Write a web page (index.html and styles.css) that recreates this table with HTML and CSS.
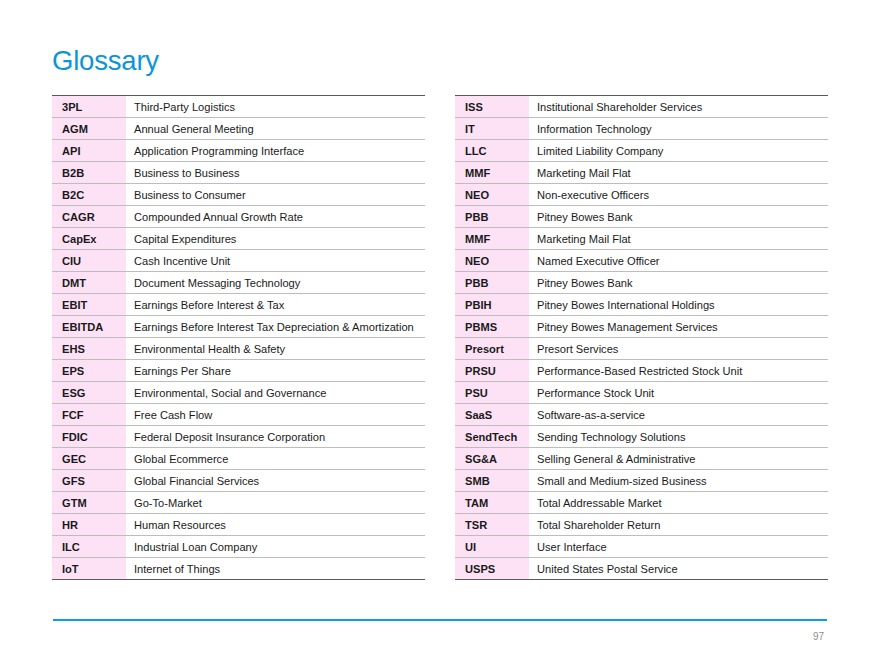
FILE: index.html
```html
<!DOCTYPE html>
<html>
<head>
<meta charset="utf-8">
<link rel="stylesheet" href="styles.css">
</head>
<body>
<div class="page">
  <h1 class="title">Glossary</h1>
  <div class="tables">
    <table class="gloss">
      <tr><td class="term">3PL</td><td class="def">Third-Party Logistics</td></tr>
      <tr><td class="term">AGM</td><td class="def">Annual General Meeting</td></tr>
      <tr><td class="term">API</td><td class="def">Application Programming Interface</td></tr>
      <tr><td class="term">B2B</td><td class="def">Business to Business</td></tr>
      <tr><td class="term">B2C</td><td class="def">Business to Consumer</td></tr>
      <tr><td class="term">CAGR</td><td class="def">Compounded Annual Growth Rate</td></tr>
      <tr><td class="term">CapEx</td><td class="def">Capital Expenditures</td></tr>
      <tr><td class="term">CIU</td><td class="def">Cash Incentive Unit</td></tr>
      <tr><td class="term">DMT</td><td class="def">Document Messaging Technology</td></tr>
      <tr><td class="term">EBIT</td><td class="def">Earnings Before Interest &amp; Tax</td></tr>
      <tr><td class="term">EBITDA</td><td class="def">Earnings Before Interest Tax Depreciation &amp; Amortization</td></tr>
      <tr><td class="term">EHS</td><td class="def">Environmental Health &amp; Safety</td></tr>
      <tr><td class="term">EPS</td><td class="def">Earnings Per Share</td></tr>
      <tr><td class="term">ESG</td><td class="def">Environmental, Social and Governance</td></tr>
      <tr><td class="term">FCF</td><td class="def">Free Cash Flow</td></tr>
      <tr><td class="term">FDIC</td><td class="def">Federal Deposit Insurance Corporation</td></tr>
      <tr><td class="term">GEC</td><td class="def">Global Ecommerce</td></tr>
      <tr><td class="term">GFS</td><td class="def">Global Financial Services</td></tr>
      <tr><td class="term">GTM</td><td class="def">Go-To-Market</td></tr>
      <tr><td class="term">HR</td><td class="def">Human Resources</td></tr>
      <tr><td class="term">ILC</td><td class="def">Industrial Loan Company</td></tr>
      <tr><td class="term">IoT</td><td class="def">Internet of Things</td></tr>
    </table>
    <table class="gloss">
      <tr><td class="term">ISS</td><td class="def">Institutional Shareholder Services</td></tr>
      <tr><td class="term">IT</td><td class="def">Information Technology</td></tr>
      <tr><td class="term">LLC</td><td class="def">Limited Liability Company</td></tr>
      <tr><td class="term">MMF</td><td class="def">Marketing Mail Flat</td></tr>
      <tr><td class="term">NEO</td><td class="def">Non-executive Officers</td></tr>
      <tr><td class="term">PBB</td><td class="def">Pitney Bowes Bank</td></tr>
      <tr><td class="term">MMF</td><td class="def">Marketing Mail Flat</td></tr>
      <tr><td class="term">NEO</td><td class="def">Named Executive Officer</td></tr>
      <tr><td class="term">PBB</td><td class="def">Pitney Bowes Bank</td></tr>
      <tr><td class="term">PBIH</td><td class="def">Pitney Bowes International Holdings</td></tr>
      <tr><td class="term">PBMS</td><td class="def">Pitney Bowes Management Services</td></tr>
      <tr><td class="term">Presort</td><td class="def">Presort Services</td></tr>
      <tr><td class="term">PRSU</td><td class="def">Performance-Based Restricted Stock Unit</td></tr>
      <tr><td class="term">PSU</td><td class="def">Performance Stock Unit</td></tr>
      <tr><td class="term">SaaS</td><td class="def">Software-as-a-service</td></tr>
      <tr><td class="term">SendTech</td><td class="def">Sending Technology Solutions</td></tr>
      <tr><td class="term">SG&amp;A</td><td class="def">Selling General &amp; Administrative</td></tr>
      <tr><td class="term">SMB</td><td class="def">Small and Medium-sized Business</td></tr>
      <tr><td class="term">TAM</td><td class="def">Total Addressable Market</td></tr>
      <tr><td class="term">TSR</td><td class="def">Total Shareholder Return</td></tr>
      <tr><td class="term">UI</td><td class="def">User Interface</td></tr>
      <tr><td class="term">USPS</td><td class="def">United States Postal Service</td></tr>
    </table>
  </div>
  <div class="footer">
    <div class="rule"></div>
    <div class="pagenum">97</div>
  </div>
</div>
</body>
</html>
```

FILE: styles.css
```css
html, body {
  margin: 0;
  padding: 0;
  background: #ffffff;
}

.page {
  width: 880px;
  height: 660px;
  box-sizing: border-box;
  padding: 0 52px 0 52px;
  font-family: "Liberation Sans", Arial, sans-serif;
  color: #1a1a1a;
}

.title {
  margin: 0;
  padding-top: 44px;
  height: 51px;
  font-size: 27.5px;
  line-height: 34px;
  font-weight: normal;
  color: #0a96d8;
  letter-spacing: -0.2px;
}

.tables {
  display: grid;
  grid-template-columns: 373px 373px;
  column-gap: 30px;
}

.gloss {
  border-collapse: collapse;
  width: 100%;
  border-top: 1px solid #5a5a5a;
  border-bottom: 1px solid #5a5a5a;
  font-size: 11.1px;
}

.gloss tr {
  border-bottom: 1px solid #bdbdbd;
}

.gloss tr:last-child {
  border-bottom: 1px solid #5a5a5a;
}

.gloss td {
  height: 21px;
  padding: 0;
  vertical-align: middle;
  white-space: nowrap;
}

.term {
  width: 64px;
  padding-left: 10px !important;
  background: #fde2f5;
  font-weight: bold;
}

.def {
  padding-left: 8px !important;
}

.footer {
  padding-top: 39px;
}

.rule {
  height: 2px;
  background: #0aa0e0;
  margin-left: 1px;
  margin-right: 1px;
}

.pagenum {
  text-align: right;
  font-size: 10px;
  color: #8c8c8c;
  padding-top: 10px;
  padding-right: 4px;
}
```
